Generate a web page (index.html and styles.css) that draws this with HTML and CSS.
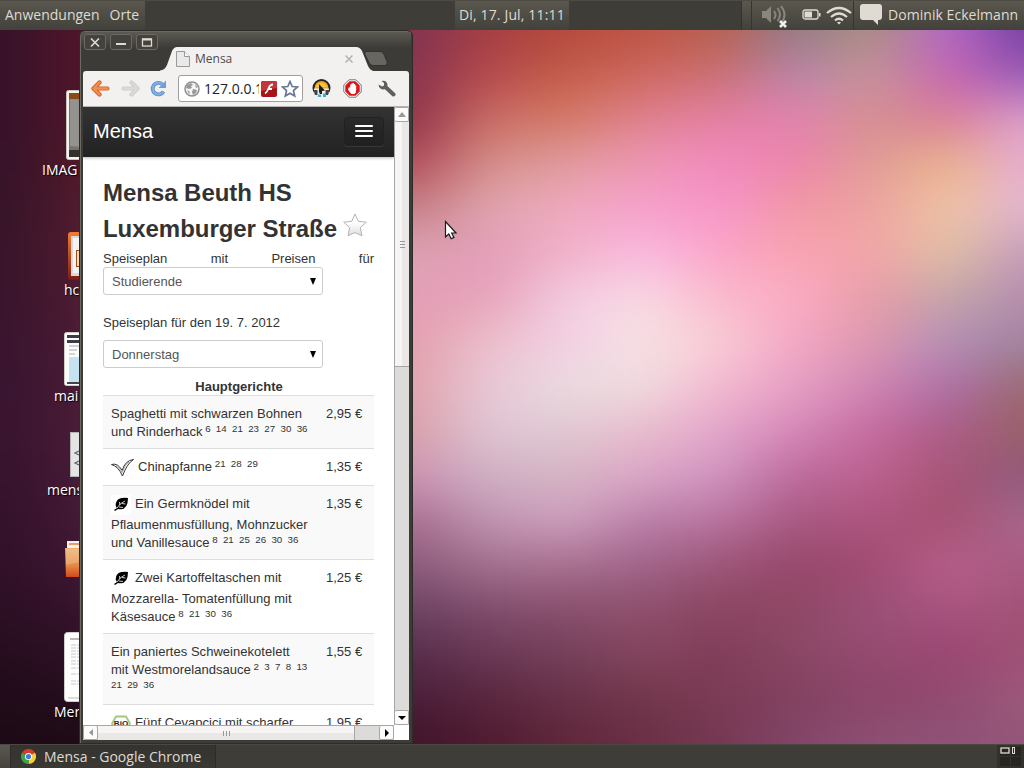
FILE: index.html
```html
<!DOCTYPE html>
<html lang="de">
<head>
<meta charset="utf-8">
<title>Mensa</title>
<link rel="stylesheet" href="styles.css">
</head>
<body>
<div class="screen">
  <header class="panel">
    <nav class="seg menus"><span>Anwendungen</span><span>Orte</span></nav>
    <div class="seg clock"><span>Di, 17. Jul, 11:11</span></div>
    <div class="seg tray">
      <svg class="vol" width="28" height="26" viewBox="0 0 28 26"><path d="M1 9h4l5-5v17l-5-5H1z" fill="#89867d"/><g fill="none" stroke="#89867d" stroke-width="2"><path d="M13 9q3 4 0 8M16.500 6q5 7 0 13M20 4q7 9 0 17"/></g><path d="M19 19l6 6m0-6l-6 6" stroke="#eee" stroke-width="2.600"/></svg>
      <svg class="bat" width="19" height="12" viewBox="0 0 19 12"><rect x="1" y="1" width="15" height="9" rx="2" fill="none" stroke="#dfdbd2" stroke-width="1.300"/><path d="M2.500 2.500H10v6H2.500zM17 4h1.500v3.500H17z" fill="#dfdbd2"/></svg>
      <svg class="wifi" width="26" height="19" viewBox="0 0 26 19"><g fill="none" stroke="#dfdbd2" stroke-width="2.200"><path d="M1 7Q13-3 25 7M5 11q8-7 16 0M9 14.500q4-3.500 8 0"/></g><path d="M11 16.500q2-1.500 4 0l-2 2z" fill="#dfdbd2"/></svg>
      <i class="divider"></i>
      <svg class="chat" width="22" height="21" viewBox="0 0 22 21"><path d="M3 0h16q3 0 3 3v10q0 3-3 3h-1v5l-5-5H3q-3 0-3-3V3q0-3 3-3z" fill="#dfdbd2"/></svg>
      <span class="user">Dominik Eckelmann</span>
    </div>
  </header>

  <main class="desktop">
    <div class="wallpaper">
      <i></i><i></i><i></i><i></i><i></i><i></i><i></i><i></i><i></i><i></i><i></i><i></i><i></i><i></i><i></i><i></i><i></i>
    </div>

    <div class="file f-image"><svg width="30" height="70"><rect x=".5" y=".5" width="40" height="69" rx="2" fill="#f4f3f0" stroke="#c9c5c0"/><path d="M3 3h27v64H3z" fill="#77736f"/><path d="M3 3h27v6H3z" fill="#8c4b14"/><path d="M4 9l26 1v48l-26-2z" fill="#94928e"/><path d="M3 60h27v7H3z" fill="#34312d"/></svg><span>IMAG</span></div>
    <div class="file f-hc"><svg width="30" height="48"><defs><linearGradient id="og" x2="0" y2="1"><stop offset="0" stop-color="#f07e33"/><stop offset="1" stop-color="#7d1c16"/></linearGradient></defs><rect width="40" height="48" rx="3" fill="url(#og)"/><path d="M3 4h27v40H3z" fill="#d9d9d9"/><path d="M5 6h25v35H5z" fill="#f3f3f3"/><rect x="8.500" y="18.500" width="30" height="16" fill="#f5d9bf" stroke="#a44a12"/></svg><span>hc</span></div>
    <div class="file f-mai"><svg width="30" height="54"><rect x=".5" y=".5" width="40" height="53" rx="2" fill="#fbfbfb" stroke="#d0cdc8"/><path d="M3 3h27v3H3zM3 8h27v3H3z" fill="#3b3d44"/><path d="M5 14h12M5 18h8M5 22h6" stroke="#aaa"/><path d="M5 25h25v26H5z" fill="#c5e2f0"/><path d="M3 50h27v2H3z" fill="#444"/></svg><span>mai</span></div>
    <div class="file f-mens"><svg width="30" height="45"><rect x=".5" y=".5" width="40" height="44" fill="#e4e4e4" stroke="#b5b5b5"/><path d="M9 19l-4 2 4 2M9 29l-4 2 4 2" fill="none" stroke="#5c6670" stroke-width="1.300"/></svg><span>mens</span></div>
    <div class="file f-folder"><svg width="30" height="38"><defs><linearGradient id="fg" x2="0" y2="1"><stop offset="0" stop-color="#ecb06c"/><stop offset=".6" stop-color="#e58a42"/><stop offset="1" stop-color="#d4481a"/></linearGradient></defs><path d="M2 1h28v12H2z" fill="#f4f1ee"/><path d="M4 3h26v2H4z" fill="#ee9a63"/><path d="M0 8h30v29H1z" fill="url(#fg)"/><path d="M1 9h29v11q-14 1-29 5z" fill="#fff" opacity=".2"/></svg></div>
    <div class="file f-men"><svg width="30" height="70"><rect x=".5" y=".5" width="40" height="69" rx="3" fill="#fdfdfd" stroke="#d0cdc8"/><path d="M6 7h24" stroke="#777"/><path d="M7 13h23M7 16h23M7 19h23M7 22h23M7 25h23M7 29h23M7 32h23M7 36h23M7 42h23M7 49h23M7 52h23" stroke="#c9c9c9" stroke-dasharray="5 1 3 1"/><path d="M4 66h26" stroke="#bbb"/></svg><span>Mer</span></div>

    <section class="window">
      <div class="titlebar">
        <div class="winbtns">
          <b><svg width="20" height="15"><path d="M6 3.500l8 8m0-8l-8 8" stroke="#dfdbd2" stroke-width="1.700"/></svg></b>
          <b><svg width="20" height="15"><path d="M5 9h10" stroke="#dfdbd2" stroke-width="2"/></svg></b>
          <b><svg width="20" height="15"><rect x="5.500" y="4" width="9" height="7" fill="none" stroke="#dfdbd2" stroke-width="1.300"/><path d="M5 4.500h10" stroke="#dfdbd2" stroke-width="2"/></svg></b>
        </div>
        <div class="tabs">
          <svg class="tabshape" width="252" height="26" viewBox="0 0 252 26"><path d="M0 26V24.500Q5 24 7 19L12 5Q14 1 17 1H196Q200 1 202 5L208 20Q210 24.500 215 25.500V26z" fill="#f2f1f0"/><path d="M206 5.500h14q3 0 4 3l3 7q1 4-2 4h-12q-3 0-4-3l-4-8q-1-3 1-3z" fill="#686661" stroke="#32312e"/></svg>
          <div class="tabtext"><svg width="14" height="16"><path d="M.5.5h8l5 5v10H.5z" fill="#e9e9e9" stroke="#999"/><path d="M8.500.5v5h5" fill="#fff" stroke="#999"/></svg><span>Mensa</span><svg class="x" width="8" height="8"><path d="M.5.5l7 7m0-7l-7 7" stroke="#b4b2b0" stroke-width="1.500"/></svg></div>
        </div>
      </div>

      <div class="toolbar">
        <svg width="19" height="17" viewBox="0 0 19 17"><path d="M2.500 8.500L8.500 2.500M2.500 8.500L8.500 14.500M3 8.500h13.500" fill="none" stroke="#d8592a" stroke-width="4.200" stroke-linecap="round"/><path d="M2.500 8.500L8.500 2.500M2.500 8.500L8.500 14.500M3 8.500h13.500" fill="none" stroke="#f0914c" stroke-width="2.400" stroke-linecap="round"/></svg>
        <svg class="fwd" width="19" height="17" viewBox="0 0 19 17"><path d="M16.500 8.500L10.500 2.500M16.500 8.500L10.500 14.500M16 8.500H2.500" fill="none" stroke="#cfcdcb" stroke-width="4.200" stroke-linecap="round"/><path d="M16.500 8.500L10.500 2.500M16.500 8.500L10.500 14.500M16 8.500H2.500" fill="none" stroke="#dbd9d7" stroke-width="2.400" stroke-linecap="round"/></svg>
        <svg class="reload" width="17" height="17" viewBox="0 0 17 17"><path d="M12.500 4.500A5.800 5.800 0 1 0 13.500 11.500" fill="none" stroke="#5b91cb" stroke-width="3.800"/><path d="M12.500 4.500A5.800 5.800 0 1 0 13.500 11.500" fill="none" stroke="#82b1df" stroke-width="2"/><path d="M16 .5V8H8.500z" fill="#6b9fd5"/></svg>
        <div class="omnibox">
          <svg width="16" height="16" viewBox="0 0 16 16"><circle cx="8" cy="8" r="7" fill="#f5f5f5" stroke="#8f8f8f" stroke-width="1.500"/><path d="M3 4l4-2 2 2-2 1 1 2-3 1-3-1zM9 8l4 1-1 3-3 2-1-3zM11 3l3 3-2 1zM3 9l3 2-1 2z" fill="#999"/></svg>
          <span class="url">127.0.0.1</span>
          <svg class="flash" width="16" height="16"><rect width="16" height="16" rx="2" fill="#a81418"/><path d="M0 2q0-2 2-2h12q2 0 2 2v5L0 10z" fill="#c2373a"/><path d="M12 3.500q-3 0-4.500 4T4 12.500M7 8h4" fill="none" stroke="#fff" stroke-width="1.800"/></svg>
          <svg class="bm" width="18" height="18" viewBox="0 0 18 18"><path d="M9 1.500l2.200 5 5.300.5-4 3.600 1.200 5.400L9 13.200 4.300 16l1.200-5.400-4-3.600 5.300-.5z" fill="#fff" stroke="#6b7894" stroke-width="1.700"/></svg>
        </div>
        <svg class="ext1" width="19" height="19" viewBox="0 0 19 19"><circle cx="9.500" cy="9" r="8" fill="#f4a61c" stroke="#222" stroke-width="2"/><path d="M4 8q2-4 5.500-4T15 8z" fill="#f9c83a"/><path d="M2 9.500h15v4l-2 4.500H4l-2-4z" fill="#e4eef0"/><path d="M1.500 11h4v5H3zM13.500 11h4l-1.500 5h-2.500z" fill="#444"/><path d="M7 13V5l6 6.500-3 .5v3H8z" fill="#1d1d1d"/><path d="M6 15.500h3V18H6zM11 14.500h3V18h-3z" fill="#55a5c0"/></svg>
        <svg class="ext2" width="19" height="19" viewBox="0 0 19 19"><path d="M6 .8h7L18.200 6v7L13 18.200H6L.8 13V6z" fill="#fff" stroke="#777"/><path d="M6.500 2.300h6L16.700 6.500v6l-4.200 4.200h-6L2.300 12.500v-6z" fill="#df1219"/><path d="M6 8l1.200 1V5.500h1.200V4.500h1.200V4H11v1h1.200v1.500h1V11q0 3-2 4H8.500Q7 14 5 10.500z" fill="#fff"/></svg>
        <svg class="wrench" width="18" height="17" viewBox="0 0 18 17"><path d="M7.500 7l8 7.500" stroke="#5e5e5e" stroke-width="4" stroke-linecap="round"/><path d="M3.500 1Q8-.5 9.500 4L9 8 6 9.500Q1 9.500 .5 4.500L4 6.500 6 5.500 6 3z" fill="#5e5e5e"/></svg>
      </div>

      <div class="view">
        <div class="page">
          <div class="navbar"><span>Mensa</span><div class="burger"><i></i><i></i><i></i></div></div>
          <div class="content">
            <h1>Mensa Beuth HS<br>Luxemburger Straße <svg width="24" height="24" viewBox="0 0 24 24"><defs><linearGradient id="sg" x2="0" y2="1"><stop offset=".4" stop-color="#fff"/><stop offset="1" stop-color="#ddd"/></linearGradient></defs><path d="M12 1l3.300 7.300 8 .9-6 5.300 1.700 8.300-7-3.200-7 3.200 1.700-8.300-6-5.300 8-.9z" fill="url(#sg)" stroke="#b4b4b4"/></svg></h1>
            <p class="just"><span>Speiseplan</span> <span>mit</span> <span>Preisen</span> <span>für</span></p>
            <div class="select"><span>Studierende</span><svg width="6" height="7"><path d="M0 0h6L3 7z"/></svg></div>
            <p class="date">Speiseplan für den 19. 7. 2012</p>
            <div class="select"><span>Donnerstag</span><svg width="6" height="7"><path d="M0 0h6L3 7z"/></svg></div>
            <h2>Hauptgerichte</h2>
            <div class="row odd"><div><p>Spaghetti mit schwarzen Bohnen</p><p>und Rinderhack <sup>6 14 21 23 27 30 36</sup></p></div><b>2,95 €</b></div>
            <div class="row one"><div><p class="ico"><svg width="23" height="20" viewBox="0 0 23 20"><path d="M.5 6.500Q6.500 4.500 11.200 12.500 14 2.500 22.500 1.500 16 5.500 11.500 18 7.500 8.500 .5 6.500z" fill="#fff" stroke="#333" stroke-width="1"/><path d="M5 8q3.500 1.500 6.200 6.500Q14 6.500 18 4" fill="none" stroke="#666" stroke-width=".5"/></svg><span>Chinapfanne <sup>21 28 29</sup></span></p></div><b>1,35 €</b></div>
            <div class="row odd"><div><p class="ico"><svg class="leaf" width="20" height="20" viewBox="0 0 20 20"><path d="M17 3Q6 2 5 8q-1 3 1 5l-3 2 1 1 3-2q10 2 10-11z"/><path d="M6 13q3-5 8-7M9 10l-.5-3M11 8.500l3.500.5M8 12l4 .5" fill="none" stroke="#fff" stroke-width=".8"/></svg><span>Ein Germknödel mit</span></p><p>Pflaumenmusfüllung, Mohnzucker</p><p>und Vanillesauce <sup>8 21 25 26 30 36</sup></p></div><b>1,35 €</b></div>
            <div class="row"><div><p class="ico"><svg class="leaf" width="20" height="20" viewBox="0 0 20 20"><path d="M17 3Q6 2 5 8q-1 3 1 5l-3 2 1 1 3-2q10 2 10-11z"/><path d="M6 13q3-5 8-7M9 10l-.5-3M11 8.500l3.500.5M8 12l4 .5" fill="none" stroke="#fff" stroke-width=".8"/></svg><span>Zwei Kartoffeltaschen mit</span></p><p>Mozzarella- Tomatenfüllung mit</p><p>Käsesauce <sup>8 21 30 36</sup></p></div><b>1,25 €</b></div>
            <div class="row odd"><div><p>Ein paniertes Schweinekotelett</p><p>mit Westmorelandsauce <sup>2 3 7 8 13</sup></p><p><sup class="first">21 29 36</sup></p></div><b>1,55 €</b></div>
            <div class="row"><div><p class="ico"><svg width="20" height="20" viewBox="0 0 20 20"><path d="M5 2.500h10l4 7-4 8H5l-4-8z" fill="#fff" stroke="#a3c77f" stroke-width="1.800"/><text x="10" y="12" text-anchor="middle" class="bio">BiO</text></svg><span>Fünf Cevapcici mit scharfer</span></p></div><b>1,95 €</b></div>
          </div>
        </div>
        <div class="vscroll"><b><svg width="8" height="5"><path d="M0 5l4-5 4 5z" fill="#999"/></svg></b><div class="thumb"><i></i><i></i><i></i></div><div class="track"></div><b><svg width="8" height="4"><path d="M0 0h8L4 4z"/></svg></b></div>
        <div class="hscroll"><b><svg width="4" height="7"><path d="M4 0v7L0 3.500z" fill="#999"/></svg></b><div class="thumb"><i></i><i></i><i></i></div><div class="track"></div><b><svg width="4" height="8"><path d="M0 0v8l4-4z"/></svg></b></div>
      </div>
    </section>
    <svg class="cursor" width="14" height="21" viewBox="0 0 14 21"><path d="M1.500 1.500v15.500l3.300-3 2.400 4.700 2.700-1.300-2.200-4.400H12z" fill="#fff" stroke="#1a1a1a" stroke-width="1.200"/></svg>
  </main>

  <footer class="taskbar">
    <div class="show"></div>
    <div class="task"><svg width="15" height="15" viewBox="0 0 16 16"><path d="M8 8L1.070 4A8 8 0 0 1 14.930 4z" fill="#d93a2b"/><path d="M8 8L14.930 4A8 8 0 0 1 8 16z" fill="#f8cf38"/><path d="M8 8L8 16A8 8 0 0 1 1.070 4z" fill="#3fa34a"/><circle cx="8" cy="8" r="3.800" fill="#fff"/><circle cx="8" cy="8" r="2.800" fill="#3f7fd0"/></svg><span>Mensa - Google Chrome</span></div>
    <div class="pager"><i><svg width="10" height="7"><rect x="1" y="1" width="8" height="5" fill="none" stroke="#dfdbd2" stroke-width="1.300"/></svg></i><i><svg width="10" height="7"><rect x="1.500" y=".5" width="2" height="6" fill="none" stroke="#dfdbd2"/></svg></i><i></i><i></i></div>
  </footer>
</div>
</body>
</html>
```

FILE: styles.css
```css
* { box-sizing: border-box; }
body { margin: 0; overflow: hidden; }
p, h1, h2 { margin: 0; }
svg { display: block; flex: none; }

.screen { width: 1024px; height: 768px; display: grid; grid-template-rows: 30px 714px 24px; overflow: hidden; font-family: "Open Sans", "Noto Sans", sans-serif; font-size: 14px; color: #dfdbd2; }

/* top panel */
.panel { z-index: 2; display: flex; background: #3e3d38; border-top: 1px solid #4c4a43; line-height: 28px; white-space: nowrap; }
.seg { display: flex; background: linear-gradient(#5a574e, #42413b); }
.menus { width: 145px; padding-left: 5px; gap: 10px; }
.clock { width: 114px; padding-left: 4px; margin-left: 310px; letter-spacing: .15px; }
.tray { width: 283px; margin-left: auto; border-left: 1px solid #34332f; padding-left: 9px; align-items: flex-start; }
.tray::before { content: ""; width: 1px; height: 29px; background: #35342f; margin-right: 9px; }
.vol { margin-top: 1px; }
.bat { margin: 8px 0 0 13px; }
.wifi { margin: 5px 0 0 5px; }
.divider { width: 1px; height: 29px; background: #35342f; margin-left: 1px; }
.chat { margin: 3px 0 0 6px; }
.user { margin-left: 6px; letter-spacing: .05px; }

/* wallpaper: stacked gradient bands, blended by a blur */
.desktop { position: relative; overflow: hidden; background: #3c1428; }
.wallpaper { position: absolute; left: -60px; top: -67px; width: 1144px; padding-top: 45px; background: linear-gradient(90deg, #35122a 60px, #501528 140px, #7f3352 430px, #a53e42 549px, #bd5445 702px, #b8604f 779px, #937a88 855px, #ab8f80 931px, #b768c8 1008px, #7540a0 1084px); filter: blur(22px); }
.wallpaper i { display: block; height: 44.6px; background: linear-gradient(90deg, var(--l) 60px, var(--m) 140px, var(--a) 430px, var(--a) 473px, var(--b) 549px, var(--c) 626px, var(--d) 702px, var(--e) 779px, var(--f) 855px, var(--g) 931px, var(--h) 1008px, var(--k) 1084px); }
.wallpaper i:nth-child(1) { --l:#35122a; --m:#501528; --a:#7f3352; --b:#a53e42; --c:#b5493c; --d:#bd5445; --e:#b8604f; --f:#937a88; --g:#ab8f80; --h:#b768c8; --k:#7540a0; }
.wallpaper i:nth-child(2) { --l:#35122a; --m:#501528; --a:#8a3450; --b:#b54a4d; --c:#c45e48; --d:#cf685f; --e:#cb7075; --f:#bb85aa; --g:#c7939b; --h:#c867b0; --k:#9a5ab8; }
.wallpaper i:nth-child(3) { --l:#35122a; --m:#501528; --a:#8f3448; --b:#cb6e66; --c:#d47a66; --d:#df8290; --e:#e680a4; --f:#e382b0; --g:#d5908f; --h:#db8098; --k:#dda0cb; }
.wallpaper i:nth-child(4) { --l:#351229; --m:#501829; --a:#b34e5c; --b:#d5908a; --c:#e09c9f; --d:#ee98b4; --e:#f28abf; --f:#ee85aa; --g:#e09c98; --h:#ebb48a; --k:#e6aed0; }
.wallpaper i:nth-child(5) { --l:#351429; --m:#50192c; --a:#c58085; --b:#dfa5b0; --c:#f0aabf; --d:#f6a0cb; --e:#f796ca; --f:#f298a5; --g:#eda39f; --h:#f0c4a4; --k:#e3b6d0; }
.wallpaper i:nth-child(6) { --l:#36142a; --m:#4e1a2e; --a:#dda3b5; --b:#e49cb8; --c:#f0b2c8; --d:#fabbe0; --e:#fba6c8; --f:#f9a3b3; --g:#f2a5a8; --h:#dfc0a4; --k:#c49cba; }
.wallpaper i:nth-child(7) { --l:#37142c; --m:#4b1a30; --a:#e59db6; --b:#e6a2b8; --c:#f4cce2; --d:#f8dae4; --e:#fabacd; --f:#fcacc4; --g:#e89ca8; --h:#c3a6a8; --k:#b58cae; }
.wallpaper i:nth-child(8) { --l:#38142e; --m:#491a32; --a:#e39fae; --b:#ecc0cc; --c:#f2cfe4; --d:#f7e2e4; --e:#f9cdd6; --f:#f4a7c4; --g:#dc98ae; --h:#b58fb8; --k:#a084a0; }
.wallpaper i:nth-child(9) { --l:#381430; --m:#471a34; --a:#dfa3ac; --b:#e9c8d8; --c:#eadce0; --d:#f0dcdf; --e:#f4b8d0; --f:#e6a0c4; --g:#d085b4; --h:#ae70a8; --k:#9b6a70; }
.wallpaper i:nth-child(10) { --l:#38142f; --m:#481a35; --a:#d8a0aa; --b:#e0c5d4; --c:#e0c8d2; --d:#e9bccc; --e:#e3a6cb; --f:#d587b8; --g:#c56ba0; --h:#ab5c85; --k:#9a6068; }
.wallpaper i:nth-child(11) { --l:#36132d; --m:#451935; --a:#cb93b3; --b:#ceb0c4; --c:#d5b4c2; --d:#dca6c8; --e:#cf93c0; --f:#bc6a9c; --g:#bc618f; --h:#a75475; --k:#8f5a7c; }
.wallpaper i:nth-child(12) { --l:#33112b; --m:#421834; --a:#a86e90; --b:#bf94b0; --c:#cf9fc0; --d:#b97fa8; --e:#b9739f; --f:#a75880; --g:#ac547f; --h:#a5506f; --k:#a96890; }
.wallpaper i:nth-child(13) { --l:#301028; --m:#3e1631; --a:#8a5a7a; --b:#a4708f; --c:#a8708f; --d:#a0648a; --e:#9c5577; --f:#96466a; --g:#a04a70; --h:#b8608e; --k:#a85a80; }
.wallpaper i:nth-child(14) { --l:#2b0e23; --m:#36132b; --a:#6c4262; --b:#7f4c6c; --c:#884f6c; --d:#8e4f6c; --e:#8a4560; --f:#8f4865; --g:#9a5078; --h:#a85480; --k:#a15275; }
.wallpaper i:nth-child(15) { --l:#260d1e; --m:#2c1024; --a:#562c4a; --b:#6a3855; --c:#74405a; --d:#854560; --e:#803c58; --f:#894865; --g:#954a70; --h:#9a4672; --k:#a05075; }
.wallpaper i:nth-child(16) { --l:#200b19; --m:#240d1d; --a:#4a1d38; --b:#58253c; --c:#673048; --d:#703648; --e:#7b3a55; --f:#82405f; --g:#8c4668; --h:#914a70; --k:#9c5a7c; }
.wallpaper i:nth-child(17) { --l:#1c0a15; --m:#1e0a17; --a:#3f1428; --b:#4e1a30; --c:#5f2638; --d:#6a2e45; --e:#743852; --f:#82466a; --g:#8d5075; --h:#8f5278; --k:#925578; height: 100px; }

/* desktop icons */
.file { position: absolute; display: flex; flex-direction: column; width: 100px; color: #fff; white-space: nowrap; text-shadow: 1px 1px 1px #000; line-height: 20px; }
.f-image { left: 66px; top: 60px; }
.f-image span { margin-left: -24px; }
.f-hc { left: 68px; top: 202px; }
.f-hc span { margin-left: -4px; }
.f-mai { left: 64px; top: 302px; }
.f-mai span { margin-left: -10px; }
.f-mens { left: 70px; top: 402px; }
.f-mens span { margin: 3px 0 0 -23px; }
.f-folder { left: 65px; top: 510px; }
.f-men { left: 64px; top: 602px; }
.f-men span { margin-left: -10px; }

/* browser window */
.window { position: absolute; left: 79px; top: 0; width: 334px; height: 714px; border: 1px solid #2c2b28; border-radius: 6px 6px 0 0; padding: 0 3px 3px; background: #3c3b37; box-shadow: inset 1px 1px #6b6962; display: flex; flex-direction: column; }
.titlebar { flex: none; position: relative; height: 39px; background: linear-gradient(#5b5951, #3c3b37 16px); margin: 1px -2px 0; padding: 0 3px; }
.winbtns { display: flex; gap: 4px; padding: 2px 0 0 0; }
.winbtns b { width: 22px; height: 16px; border: 1px solid #6b6962; border-radius: 3px; background: #43423d; }
.tabs { position: absolute; left: 79px; top: 14px; }
.tabtext { position: absolute; left: 16px; top: 5px; width: 180px; display: flex; align-items: center; color: #4c4c4c; font-size: 12px; line-height: 16px; }
.tabtext span { margin-left: 5px; }
.tabtext .x { margin-left: auto; margin-right: 3px; }
.toolbar { flex: none; display: flex; align-items: center; height: 36px; padding-left: 8px; background: #f2f1f0; border-radius: 3px 3px 0 0; border-bottom: 1px solid #b5b3b0; }
.fwd { margin-left: 11px; }
.reload { margin-left: 10px; }
.omnibox { display: flex; align-items: center; width: 125px; height: 27px; margin-left: 11px; padding-left: 5px; background: #fff; border: 1px solid #a09e9b; border-radius: 3px; color: #222; }
.url { width: 55px; overflow: hidden; margin-left: 4px; line-height: 22px; }
.flash { margin-left: 2px; }
.bm { margin-left: 4px; }
.ext1 { margin-left: 9px; }
.ext2 { margin-left: 12px; }
.wrench { margin-left: 16px; }

.view { flex: none; display: grid; grid-template-columns: 311px 15px; grid-template-rows: 618px 15px; background: #fff; }
.page { overflow: hidden; background: #fff; color: #333; font: 13px/18px "Liberation Sans", Arial, sans-serif; }
.navbar { height: 50px; display: flex; justify-content: space-between; padding: 0 10px; background: linear-gradient(#333, #222); box-shadow: 0 1px 3px rgba(0,0,0,.3); color: #fff; font-size: 20px; line-height: 49px; }
.burger { width: 40px; height: 29px; margin-top: 10px; border: 1px solid #222; border-radius: 4px; background: linear-gradient(#2a2a2a, #202020); box-shadow: 0 1px #383838; padding: 7px 10px; display: flex; flex-direction: column; gap: 3px; }
.burger i { height: 2px; background: #fff; border-radius: 1px; }
.content { padding: 18px 20px 0; }
h1 { font-size: 24px; line-height: 36px; height: 75px; white-space: nowrap; letter-spacing: -.04px; }
h1 svg { display: inline-block; vertical-align: 0; margin-left: -1px; }
.just { display: flex; justify-content: space-between; height: 17px; }
.select { display: flex; justify-content: space-between; align-items: center; width: 220px; height: 28px; padding: 0 6px 0 8px; border: 1px solid #ccc; border-radius: 3px; color: #555; }
.select span { padding-top: 2px; }
.date { margin: 19px 0 8px; }
.select svg { fill: #000; }
h2 { font-size: 13px; line-height: 18px; text-align: center; margin-top: 10px; height: 17px; padding-left: 1px; }
.row { display: flex; border-top: 1px solid #ddd; padding: 9px 8px 7px; white-space: nowrap; }
.row.odd { background: #f9f9f9; }
.row > div { width: 215px; }
.row > b { font-weight: normal; }
.row p { height: 18px; letter-spacing: .03px; }
.row .ico { height: 21px; display: flex; gap: 4px; }
.row.one .ico { height: 20px; }
.leaf { background: #fff; }
sup { font-size: 9.75px; line-height: 0; vertical-align: 4px; word-spacing: 2.6px; letter-spacing: 0; margin-left: -1px; }
.first { margin-left: 0; }
.bio { font: bold 8px "Liberation Sans", sans-serif; fill: #222; }

.vscroll { display: flex; flex-direction: column; border-left: 1px solid #a8a6a4; background: #dcdbda; }
.vscroll b, .hscroll b { display: flex; align-items: center; justify-content: center; width: 14px; height: 15px; background: #fbfbfa; border: 1px solid #a8a6a4; border-radius: 2px; }
.vscroll b { border-left: 0; }
.thumb { display: flex; align-items: center; justify-content: center; gap: 2px; background: linear-gradient(90deg, #f6f5f4 50%, #e9e8e6 50%); }
.vscroll .thumb { flex-direction: column; height: 245px; border-bottom: 1px solid #a8a6a4; }
.vscroll .thumb i { width: 5px; height: 1px; background: #999; }
.track { flex: 1; }
.hscroll { display: flex; border-top: 1px solid #a8a6a4; background: #dcdbda; }
.hscroll b { width: 15px; height: 14px; border-top: 0; }
.hscroll .thumb { width: 257px; border-right: 1px solid #a8a6a4; background: linear-gradient(#f6f5f4 50%, #e9e8e6 50%); }
.hscroll .thumb i { width: 1px; height: 5px; background: #999; }
.cursor { position: absolute; left: 444px; top: 190px; }

/* bottom panel */
.taskbar { z-index: 2; display: flex; background: #3e3d38; border-top: 1px solid #4a4841; line-height: 23px; }
.show { width: 11px; background: linear-gradient(#5a574e, #45433d); border-right: 1px solid #2e2d2a; }
.task { width: 205px; display: flex; align-items: center; padding-left: 10px; gap: 8px; background: linear-gradient(#34332f, #393833); border-right: 1px solid #2c2b28; white-space: nowrap; }
.pager { width: 27px; margin-left: auto; padding: 2px; display: grid; grid-template-columns: 10px 10px; grid-auto-rows: 9px; gap: 1px; background: #32312d; padding-left: 3px; }
.pager i { background: #262522; }
```
